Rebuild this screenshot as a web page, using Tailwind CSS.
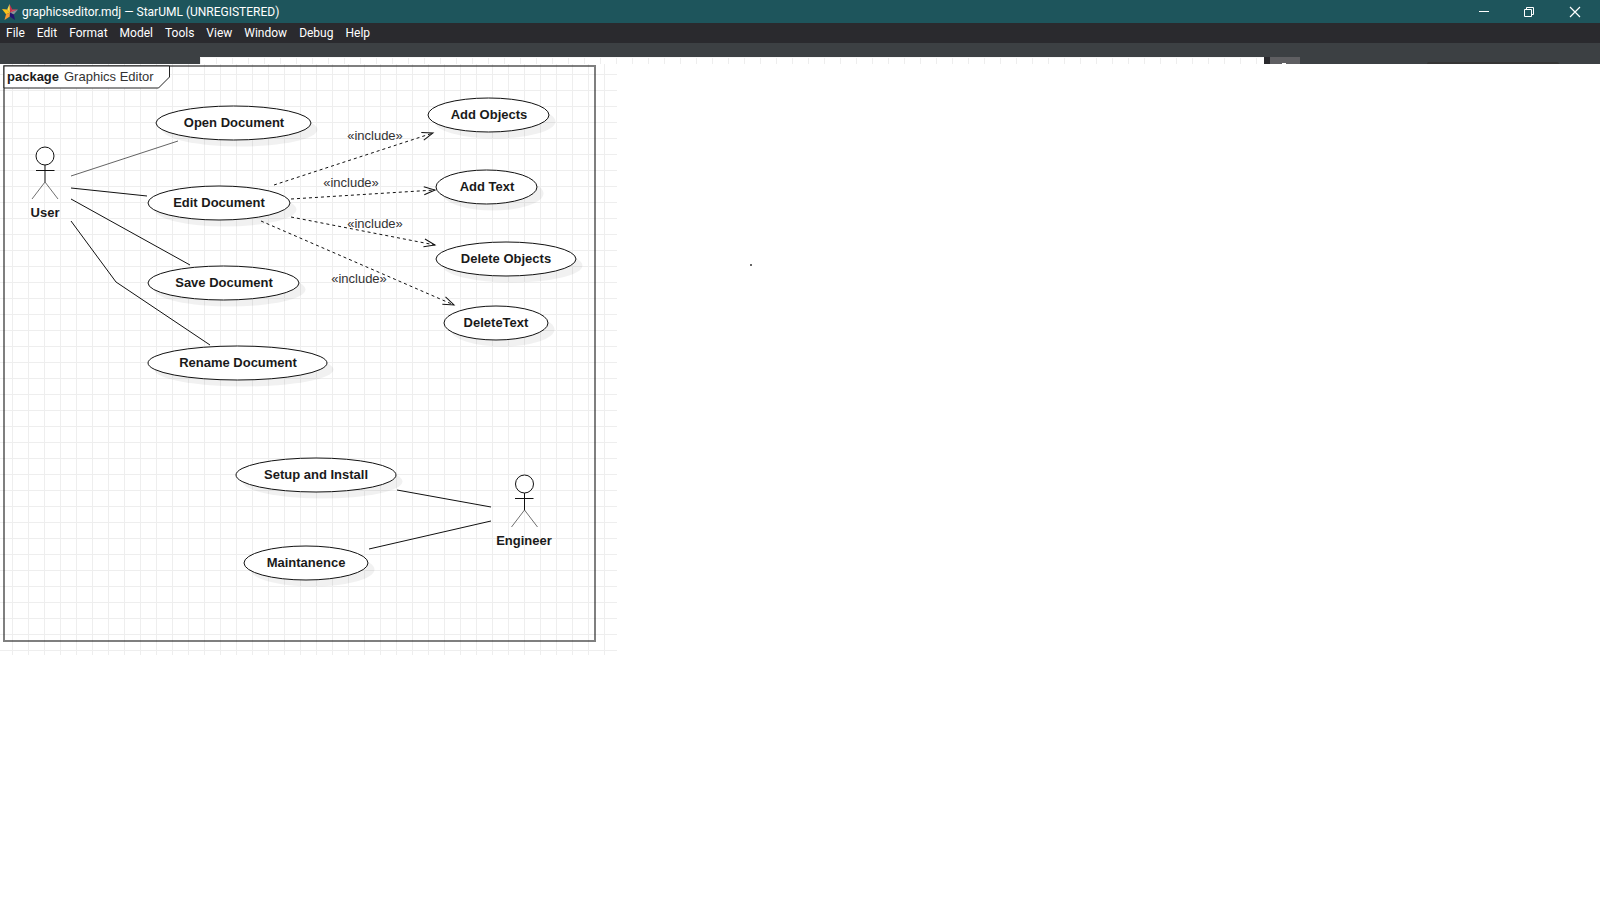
<!DOCTYPE html>
<html lang="en">
<head>
<meta charset="utf-8">
<title>graphicseditor.mdj — StarUML (UNREGISTERED)</title>
<script src="https://cdn.jsdelivr.net/npm/@tailwindcss/browser@4"></script>
</head>
<body class="min-h-screen bg-white font-[Roboto,'Open_Sans',sans-serif] text-xs text-white">
<header>
  <div class="flex h-[23px] items-center bg-[#1e555c] pl-0.5 pr-0.5">
    <svg class="mr-1 size-4 shrink-0" viewBox="0 0 16 16" aria-hidden="true">
      <path d="M7.500 0 10.300 5.500 8 8.800Z" fill="#c9304b"/>
      <path d="M7.500 0 5.200 5.500 8 8.800Z" fill="#ffd94a"/>
      <path d="M0 5 5.200 5.500 8 8.800 4 10.200Z" fill="#fbc21a"/>
      <path d="M16 5.500 10.300 5.500 8 8.800Z" fill="#e0485c"/>
      <path d="M16 5.500 8 8.800 11.800 10.500Z" fill="#8f8f96"/>
      <path d="M4 10.200 8 8.800 7.800 12.600 2.500 16Z" fill="#f79a32"/>
      <path d="M8 8.800 11.800 10.500 13 16 7.800 12.600Z" fill="#27126f"/>
    </svg>
    <h1 class="flex-1 whitespace-nowrap">graphicseditor.mdj — StarUML (UNREGISTERED)</h1>
    <button class="flex h-full w-[45px] items-center justify-center" aria-label="Minimize"><svg class="size-3" viewBox="0 0 12 12" stroke="#fff" fill="none"><path d="M1 5.500H11"/></svg></button>
    <button class="flex h-full w-[46px] items-center justify-center" aria-label="Restore"><svg class="size-3" viewBox="0 0 12 12" stroke="#fff" fill="none"><path d="M1.500 3.500H8.500V10.500H1.500ZM3.500 3.500V1.500H10.500V8.500H8.500"/></svg></button>
    <button class="flex h-full w-[46px] items-center justify-center" aria-label="Close"><svg class="size-3" viewBox="0 0 12 12" stroke="#fff" stroke-width="1.200" fill="none"><path d="M1 1 11 11M11 1 1 11"/></svg></button>
  </div>
  <nav class="flex h-5 items-center gap-3 bg-[#2a2a2e] pl-1.5" aria-label="Main menu">
    <button>File</button><button>Edit</button><button>Format</button><button>Model</button><button>Tools</button><button>View</button><button>Window</button><button>Debug</button><button>Help</button>
  </nav>
  <div class="h-3.5 bg-[#3c4043]"></div>
  <div class="flex h-[7px] bg-[#3c4043]">
    <div class="w-[200px]"></div>
    <div class="flex-1 border-t border-[#f6f6f6] bg-white bg-[linear-gradient(to_right,#eeeeee_1px,transparent_1px)] bg-size-[16px_100%] bg-position-[16px_0px]"></div>
    <div class="w-1.5 bg-[#2a2a2e]"></div>
    <div class="flex w-[30px] items-end justify-center bg-[#5f5f62] pr-0.5"><div class="h-px w-1 bg-white"></div></div>
    <div class="flex w-[300px] items-end pl-[127px]"><div class="h-0.5 w-[132px] rounded-t bg-[#353535]"></div></div>
  </div>
</header>
<main class="relative">
  <svg class="block h-[591px] w-[617px] font-['Liberation_Sans',Arial,sans-serif] text-[13px]" viewBox="0 64 617 591" role="img" aria-label="Use case diagram: Graphics Editor">
    <defs>
      <pattern id="grid" x="12" y="74" width="16" height="16" patternUnits="userSpaceOnUse">
        <path d="M0 .5H16M.5 0V16" stroke="#eeeeee" fill="none"/>
      </pattern>
      <marker id="arrow" viewBox="-12 -6 14 12" markerWidth="14" markerHeight="12" refX="0" refY="0" orient="auto" markerUnits="userSpaceOnUse">
        <path d="M-11 -4 0 0 -11 4" fill="none" stroke="#111"/>
      </marker>
    </defs>
    <rect y="64" width="617" height="591" fill="url(#grid)"/>

    <!-- package frame -->
    <rect x="4" y="66" width="591" height="575" fill="none" stroke="#000" stroke-opacity=".5" stroke-width="2"/>
    <path d="M4 66H169.500V77L158.500 88H4Z" fill="#fff" stroke="#222"/>
    <text x="7" y="81" font-weight="700" fill="#1a1a1a">package</text>
    <text x="64" y="81" fill="#333">Graphics Editor</text>

    <!-- use case shadows -->
    <g fill="#000" fill-opacity=".055">
      <ellipse cx="240" cy="129.500" rx="77.500" ry="17"/><ellipse cx="225.500" cy="209.500" rx="71" ry="17"/>
      <ellipse cx="230" cy="289.500" rx="75.500" ry="17"/><ellipse cx="244" cy="369.500" rx="89.500" ry="17"/>
      <ellipse cx="495" cy="121.500" rx="60.500" ry="17"/><ellipse cx="493" cy="193.500" rx="50.500" ry="17"/>
      <ellipse cx="512.500" cy="265.500" rx="70" ry="17"/><ellipse cx="502.500" cy="329.500" rx="52" ry="17"/>
      <ellipse cx="322.500" cy="481.500" rx="80" ry="17"/><ellipse cx="312.500" cy="569.500" rx="62" ry="17"/>
    </g>
    <!-- use cases -->
    <g fill="#fff" stroke="#111">
      <ellipse cx="233.500" cy="123" rx="77.500" ry="17"/><ellipse cx="219" cy="203" rx="71" ry="17"/>
      <ellipse cx="223.500" cy="283" rx="75.500" ry="17"/><ellipse cx="237.500" cy="363" rx="89.500" ry="17"/>
      <ellipse cx="488.500" cy="115" rx="60.500" ry="17"/><ellipse cx="486.500" cy="187" rx="50.500" ry="17"/>
      <ellipse cx="506" cy="259" rx="70" ry="17"/><ellipse cx="496" cy="323" rx="52" ry="17"/>
      <ellipse cx="316" cy="475" rx="80" ry="17"/><ellipse cx="306" cy="563" rx="62" ry="17"/>
    </g>
    <g font-weight="700" text-anchor="middle" fill="#1a1a1a">
      <text x="234" y="127">Open Document</text><text x="219" y="207">Edit Document</text>
      <text x="224" y="287">Save Document</text><text x="238" y="367">Rename Document</text>
      <text x="489" y="119">Add Objects</text><text x="487" y="191">Add Text</text>
      <text x="506" y="263">Delete Objects</text><text x="496" y="327">DeleteText</text>
      <text x="316" y="479">Setup and Install</text><text x="306" y="567">Maintanence</text>
      <text x="45" y="217">User</text><text x="524" y="545">Engineer</text>
    </g>

    <!-- actors -->
    <g fill="none" stroke="#111">
      <circle cx="45" cy="156" r="9" fill="#fff"/><path d="M45 165V182M36 170.500H54.500"/><path d="M32 199 45 182 58 199" stroke-opacity=".6"/>
      <circle cx="524.500" cy="484" r="9" fill="#fff"/><path d="M524.500 493V510M515 498.500H533.500"/><path d="M511.500 527 524.500 510 537.500 527" stroke-opacity=".6"/>
    </g>

    <!-- associations -->
    <g fill="none" stroke="#111">
      <path d="M71 176 178 141" stroke-opacity=".65"/>
      <path d="M71 188 147 196M71 199 190 265M71 221 116 282 210 345M397 490 491 507M369 549 491 521"/>
    </g>
    <!-- include dependencies -->
    <g stroke="#111">
      <line x1="274" y1="185" x2="433" y2="133" stroke-dasharray="3" marker-end="url(#arrow)"/>
      <line x1="291" y1="199" x2="435" y2="190" stroke-dasharray="3" marker-end="url(#arrow)"/>
      <line x1="291" y1="217" x2="435" y2="245" stroke-dasharray="3" marker-end="url(#arrow)"/>
      <line x1="261" y1="221" x2="454" y2="305" stroke-dasharray="3" marker-end="url(#arrow)"/>
    </g>
    <g text-anchor="middle" fill="#333">
      <text x="375" y="140">«include»</text><text x="351" y="187">«include»</text>
      <text x="375" y="228">«include»</text><text x="359" y="283">«include»</text>
    </g>
  </svg>
  <div class="absolute left-[750px] top-[200px] size-0.5 rounded-full bg-[#333333]"></div>
</main>
</body>
</html>
